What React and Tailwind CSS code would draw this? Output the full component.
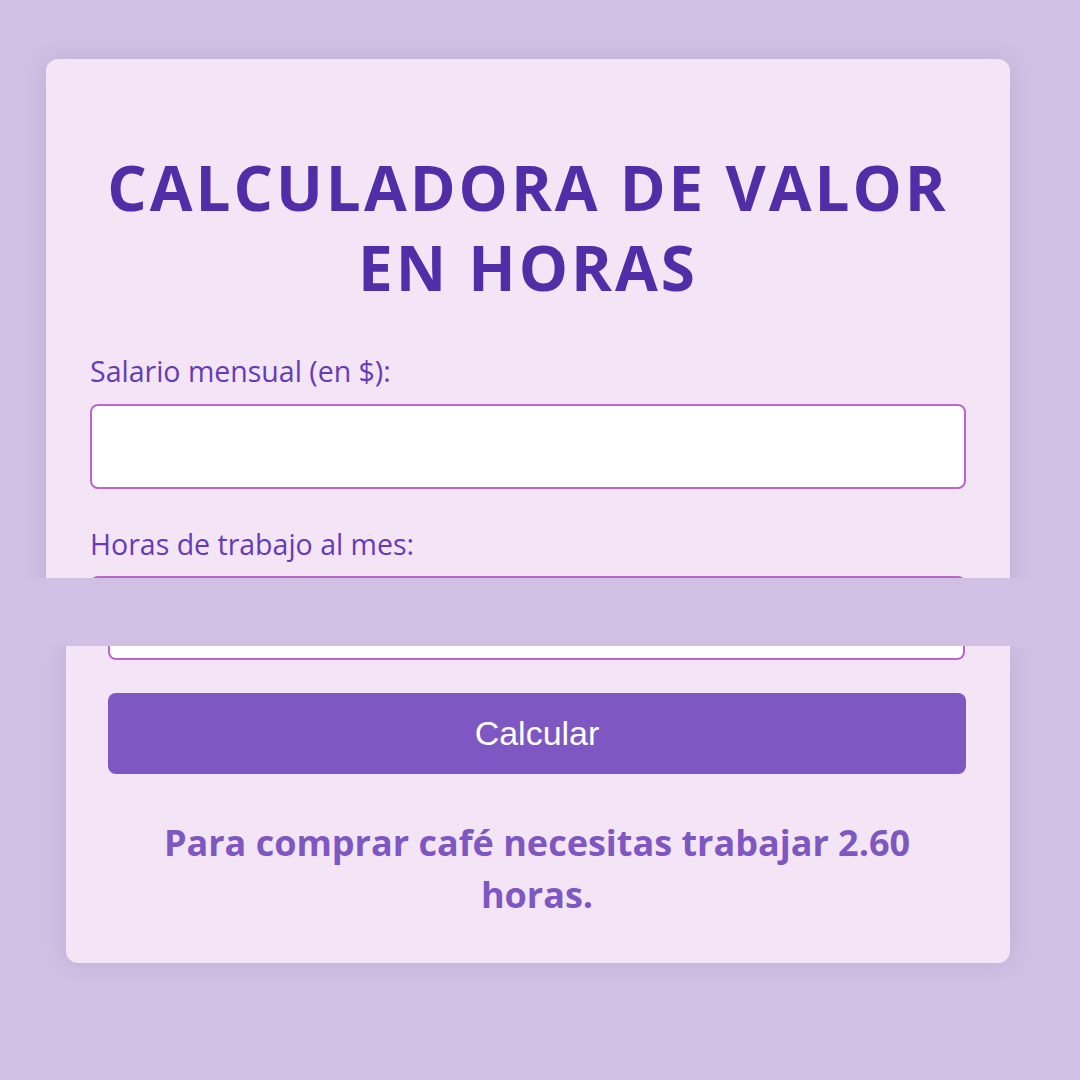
const sans = { fontFamily: '"Open Sans", "Noto Sans", sans-serif' };

const Label = ({ children }) => (
  <label className="block text-[28.5px] leading-[40px] text-[#673ab7]" style={sans}>
    {children}
  </label>
);

const App = () => {
  return (
    <div className="w-[1080px] h-[1080px] bg-[#d0c0e3] overflow-hidden">
      {/* upper capture */}
      <div className="h-[578px] overflow-hidden pt-[59px] pl-[46px]">
        <div className="w-[964px] h-[620px] bg-[#f3e5f5] rounded-t-xl shadow-[0_0_22px_rgba(80,40,140,0.12)] px-[44px] pt-[88px]">
          <h1
            className="text-center text-[62px] leading-[80px] font-bold tracking-[3px] text-[#512da8]"
            style={sans}
          >
            CALCULADORA DE VALOR EN HORAS
          </h1>
          <div className="mt-[44px]">
            <Label>Salario mensual (en $):</Label>
            <div className="mt-[13px] h-[85px] bg-white border-2 border-[#ba68c8] rounded-lg" />
          </div>
          <div className="mt-[35px]">
            <Label>Horas de trabajo al mes:</Label>
            <div className="mt-[12px] h-[85px] bg-white border-2 border-[#ba68c8] rounded-lg" />
          </div>
        </div>
      </div>

      {/* gap between captures */}
      <div className="h-[68px]" />

      {/* lower capture */}
      <div className="h-[434px] overflow-hidden pl-[66px]">
        <div className="w-[944px] bg-[#f3e5f5] rounded-b-xl shadow-[0_0_22px_rgba(80,40,140,0.12)] pl-[42px] pr-[44px] pb-[42px]">
          <div className="h-[14px] bg-white border-2 border-t-0 border-[#ba68c8] rounded-b-lg mr-[1px]" />
          <button
            className="mt-[33px] w-full h-[81px] bg-[#7e57c2] rounded-lg text-white text-[34px]"
            style={{ fontFamily: '"Liberation Sans", Arial, sans-serif' }}
          >
            Calcular
          </button>
          <p
            className="mt-[43px] text-center text-[36px] leading-[52px] font-bold text-[#7e57c2] px-[50px]"
            style={sans}
          >
            Para comprar café necesitas trabajar 2.60 horas.
          </p>
        </div>
      </div>
    </div>
  );
};

export default App;
